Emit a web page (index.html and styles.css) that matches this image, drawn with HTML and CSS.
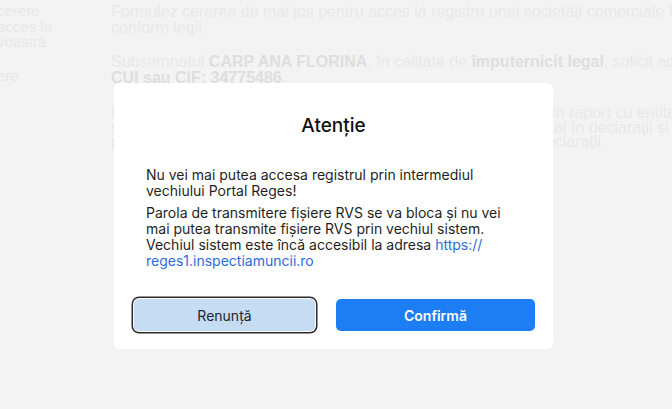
FILE: index.html
```html
<!DOCTYPE html>
<html lang="ro">
<head>
<meta charset="utf-8">
<link rel="stylesheet" href="styles.css">
</head>
<body>
<div class="page">
  <aside class="sidebar">
    <div class="side-inner">
      <p class="side-text">cerere<br>acces la<br>voastră</p>
      <p class="side-text side-gap">ere</p>
    </div>
  </aside>
  <main class="main">
    <p class="bg-p">Formulez cererea de mai jos pentru acces la registru unei societăți comerciale în vederea<br>conform legii.</p>
    <p class="bg-p bg-p2">Subsemnatul <b>CARP ANA FLORINA</b>, în calitate de <b>împuternicit legal</b>, solicit acces la registrul<br><b>CUI sau CIF: 34775486</b>.</p>
    <p class="bg-p bg-p3">Declar pe propria răspundere că dețin calitatea de mandatară în raport cu entitatea<br>și cunosc pe deplin prevederile art. 326 sau 327 din Codul penal în declarații și falsul<br>privind falsul în declarații, falsul intelectual și uzul de fals, în declarații.</p>
  </main>
</div>

<div class="overlay">
  <div class="modal" role="dialog">
    <h2 class="modal-title">Atenție</h2>
    <div class="modal-body">
      <p>Nu vei mai putea accesa registrul prin intermediul vechiului Portal Reges!</p>
      <p>Parola de transmitere fișiere RVS se va bloca și nu vei mai putea transmite fișiere RVS prin vechiul sistem. Vechiul sistem este încă accesibil la adresa <a href="#" class="link">https://<wbr>reges1.inspectiamuncii.ro</a></p>
    </div>
    <div class="modal-actions">
      <button class="btn btn-cancel">Renunță</button>
      <button class="btn btn-confirm">Confirmă</button>
    </div>
  </div>
</div>
</body>
</html>
```

FILE: styles.css
```css
* { box-sizing: border-box; }
html, body { margin: 0; padding: 0; }
body {
  background: #f3f3f3;
  width: 672px;
  height: 409px;
  overflow: hidden;
  font-family: "Liberation Sans", Arial, sans-serif;
}
.page {
  display: flex;
  height: 409px;
}
.sidebar {
  width: 111px;
  flex: none;
  overflow: hidden;
}
.side-inner {
  margin-left: -3px;
  padding-top: 3px;
}
.side-text {
  margin: 0;
  font-size: 15px;
  line-height: 15.5px;
  color: #e7e7e7;
}
.side-gap { margin-top: 18px; }
.main {
  flex: 1;
  padding-top: 4px;
  overflow: hidden;
  min-width: 0;
}
.bg-p {
  margin: 0;
  white-space: nowrap;
  font-size: 16px;
  line-height: 16px;
  color: #e8e8e8;
}
.bg-p b { color: #dedede; font-weight: 700; }
.bg-p2 { margin-top: 18px; }
.bg-p3 {
  margin-top: 20px;
  line-height: 14.5px;
}

.overlay {
  position: fixed;
  inset: 0;
  display: flex;
  justify-content: center;
  align-items: flex-start;
  padding: 83px 5px 0 0;
}
.modal {
  width: 439px;
  height: 266px;
  background: #fff;
  border-radius: 6px;
  padding: 31px 0 18px;
  font-family: Inter, "Noto Sans", sans-serif;
  color: #1f1f1f;
}
.modal-title {
  margin: 0;
  text-align: center;
  font-size: 19px;
  line-height: 24px;
  font-weight: 500;
  color: #111;
}
.modal-body {
  padding: 0 32px;
  margin-top: 29px;
  font-size: 14px;
  line-height: 15.7px;
}
.modal-body p { margin: 0; }
.modal-body p + p { margin-top: 7px; }
.link { color: #2e6bd9; text-decoration: none; }
.modal-actions {
  display: flex;
  gap: 21px;
  padding: 0 18px 0 20px;
  margin-top: 31px;
}
.btn {
  height: 32px;
  border: 0;
  border-radius: 5px;
  font-family: Inter, "Noto Sans", sans-serif;
  font-size: 14px;
  cursor: pointer;
}
.btn-cancel {
  width: 181px;
  background: #c6dcf3;
  color: #1f2430;
  font-weight: 400;
  box-shadow: 0 0 0 1px #fff, 0 0 0 2.5px #2a2a2a;
}
.btn-confirm {
  width: 199px;
  background: #1c7ef2;
  color: #fff;
  font-weight: 600;
}
```
